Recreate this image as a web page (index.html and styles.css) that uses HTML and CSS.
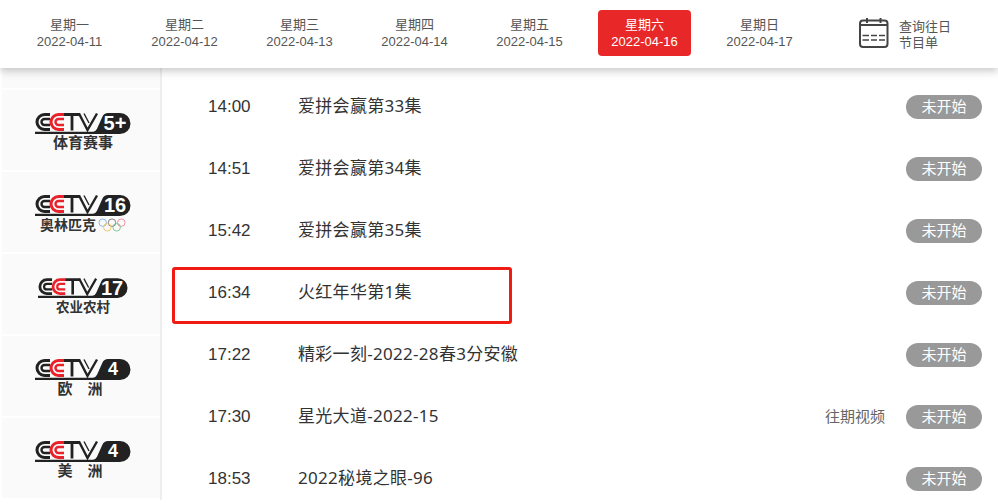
FILE: index.html
```html
<!DOCTYPE html>
<html lang="zh">
<head>
    <meta charset="UTF-8">
    <title>节目单</title>
    <link rel="stylesheet" href="styles.css">
</head>
<body>
    <svg class="defs" width="0" height="0">
        <symbol id="cctv" viewBox="0 0 96 24">
            <g fill="none">
                <path d="M15 2.500H9.500a7.500 7.500 0 0 0 0 15H15" stroke="#222" stroke-width="3"/>
                <path d="M15 7H9.500a3 3 0 0 0 0 6H15" stroke="#222" stroke-width="2.400"/>
                <path d="M29 2.500H23.500a7.500 7.500 0 0 0 0 15H29" stroke="#e8222a" stroke-width="3"/>
                <path d="M29 7H23.500a3 3 0 0 0 0 6H29" stroke="#e8222a" stroke-width="2.400"/>
                <path d="M29 2.500H45M37 2.500V18.500" stroke="#222" stroke-width="2.800"/>
                <path d="M44 1.500L52.500 18L62 1.500" stroke="#222" stroke-width="2.400"/>
                <path d="M49 1.500L54 11" stroke="#222" stroke-width="1.400"/>
            </g>
            <path d="M0 19.800H58Q60.500 19.800 62 16.800L67.500 4.500Q69 1 73 1H85a10.500 10.500 0 0 1 0 21H0Z" fill="#222"/>
        </symbol>
    </svg>

    <header class="week-bar">
        <a class="day"><span>星期一</span><span>2022-04-11</span></a>
        <a class="day"><span>星期二</span><span>2022-04-12</span></a>
        <a class="day"><span>星期三</span><span>2022-04-13</span></a>
        <a class="day"><span>星期四</span><span>2022-04-14</span></a>
        <a class="day"><span>星期五</span><span>2022-04-15</span></a>
        <a class="day active"><span>星期六</span><span>2022-04-16</span></a>
        <a class="day"><span>星期日</span><span>2022-04-17</span></a>
        <a class="history">
            <svg class="cal-icon" width="30" height="30" viewBox="0 0 30 30" fill="none" stroke="#444" stroke-width="2">
                <rect x="1" y="2.500" width="27.500" height="26.500" rx="3"/>
                <path d="M1 7H28.500M8 0V5M21.500 0V5"/>
                <path d="M3.500 17.500H10M12 17.500H18M20 17.500H26M3.500 22H10M12 22H18M20 22H26" stroke-width="1.500"/>
            </svg>
            <span>查询往日<br>节目单</span>
        </a>
    </header>

    <div class="main">
        <aside class="channels">
            <div class="channel stub"></div>
            <div class="channel">
                <div class="logo"><svg width="96" height="24"><use href="#cctv"/></svg><b class="num five">5+</b></div>
                <p class="label">体育赛事</p>
            </div>
            <div class="channel">
                <div class="logo"><svg width="96" height="24"><use href="#cctv"/></svg><b class="num">16</b></div>
                <p class="label olympic">奥林匹克
                    <svg class="rings" width="28" height="14" viewBox="0 0 30 15" fill="none" stroke-width="1">
                        <circle cx="5" cy="5" r="4" stroke="#7ab6e6"/>
                        <circle cx="15" cy="5" r="4" stroke="#777"/>
                        <circle cx="25" cy="5" r="4" stroke="#e88a9a"/>
                        <circle cx="10" cy="10" r="4" stroke="#eec46a"/>
                        <circle cx="20" cy="10" r="4" stroke="#7cc48a"/>
                    </svg>
                </p>
            </div>
            <div class="channel">
                <div class="logo small"><svg width="90" height="23"><use href="#cctv"/></svg><b class="num">17</b></div>
                <p class="label farm">农业农村</p>
            </div>
            <div class="channel">
                <div class="logo"><svg width="96" height="24"><use href="#cctv"/></svg><b class="num four">4</b></div>
                <p class="label wide">欧洲</p>
            </div>
            <div class="channel">
                <div class="logo"><svg width="96" height="24"><use href="#cctv"/></svg><b class="num four">4</b></div>
                <p class="label wide">美洲</p>
            </div>
        </aside>

        <ul class="programs">
            <li><span class="time">14:00</span><span class="name">爱拼会赢第33集</span><span class="status">未开始</span></li>
            <li><span class="time">14:51</span><span class="name">爱拼会赢第34集</span><span class="status">未开始</span></li>
            <li><span class="time">15:42</span><span class="name">爱拼会赢第35集</span><span class="status">未开始</span></li>
            <li class="marked"><span class="time">16:34</span><span class="name">火红年华第1集</span><span class="status">未开始</span></li>
            <li><span class="time">17:22</span><span class="name">精彩一刻-2022-28春3分安徽</span><span class="status">未开始</span></li>
            <li><span class="time">17:30</span><span class="name">星光大道-2022-15</span><a class="replay">往期视频</a><span class="status">未开始</span></li>
            <li><span class="time">18:53</span><span class="name">2022秘境之眼-96</span><span class="status">未开始</span></li>
        </ul>
    </div>
</body>
</html>
```

FILE: styles.css
```css
*, *::after {
    box-sizing: border-box;
}
body {
    margin: 0;
    height: 504px;
    overflow: hidden;
    background: #fff;
    font-family: "Liberation Sans", "Noto Sans CJK SC", sans-serif;
    color: #333;
}
.defs {
    display: block;
    height: 0;
}
.week-bar {
    position: relative;
    z-index: 2;
    display: flex;
    height: 68px;
    padding: 10px 0 0 23px;
    background: #fff;
    box-shadow: 0 3px 8px rgba(0, 0, 0, 0.22);
}
.day {
    display: flex;
    flex-direction: column;
    align-items: center;
    justify-content: center;
    width: 93px;
    height: 46px;
    margin-right: 22px;
    border-radius: 4px;
    font-size: 13px;
    line-height: 17px;
    color: #555;
}
.day.active {
    background: #e82828;
    color: #fff;
}
.history {
    display: flex;
    align-items: center;
    height: 46px;
    margin-left: 31px;
    font-size: 13px;
    line-height: 16px;
    color: #555;
}
.history span {
    margin-top: 4px;
}
.cal-icon {
    margin-top: -1px;
    margin-right: 10px;
}
.main {
    display: flex;
    padding-left: 2px;
}
.channels {
    flex: none;
    width: 160px;
    height: 432px;
    border-right: 2px solid #eee;
}
.channel {
    display: flex;
    flex-direction: column;
    align-items: center;
    height: 82px;
    padding: 22px 0 0 4px;
    border-bottom: 2px solid #fff;
    background: #fafafa;
}
.channel.stub {
    height: 22px;
    padding: 0;
}
.logo {
    position: relative;
    width: 96px;
    height: 24px;
}
.logo.small {
    width: 90px;
    margin-top: 1px;
}
.logo svg {
    display: block;
}
.num {
    position: absolute;
    top: 0;
    right: 4px;
    width: 24px;
    font-size: 20px;
    line-height: 22px;
    text-align: center;
    color: #fff;
}
.num.four {
    right: 6px;
    font-size: 18px;
}
.label {
    display: flex;
    align-items: center;
    margin: -2px 0 0;
    font-size: 15px;
    font-weight: bold;
    line-height: 18px;
    color: #333;
}
.label.olympic {
    gap: 2px;
    font-size: 14px;
}
.label.farm {
    font-size: 13.500px;
}
.label.wide {
    margin: -2px -9px 0 0;
    letter-spacing: 15px;
}
.programs {
    flex: 1;
    margin: 0;
    padding: 8px 0 0;
    list-style: none;
}
.programs li {
    position: relative;
    display: flex;
    align-items: center;
    height: 62px;
    padding: 0 16px 0 46px;
    font-size: 17px;
    color: #333;
}
.time {
    width: 90px;
}
.name {
    flex: 1;
    margin-top: -6px;
    font-family: "Noto Sans", "Noto Sans CJK SC", sans-serif;
    letter-spacing: 0.300px;
}
.replay {
    margin: -3px 21px 0 0;
    font-size: 15px;
    color: #666;
}
.status {
    width: 76px;
    height: 24px;
    border-radius: 12px;
    background: #999;
    font-size: 15px;
    line-height: 24px;
    text-align: center;
    color: #fff;
}
.marked::after {
    content: "";
    position: absolute;
    top: 5px;
    left: 10px;
    width: 340px;
    height: 57px;
    border: 3px solid #f01c14;
    border-radius: 3px;
}
```
